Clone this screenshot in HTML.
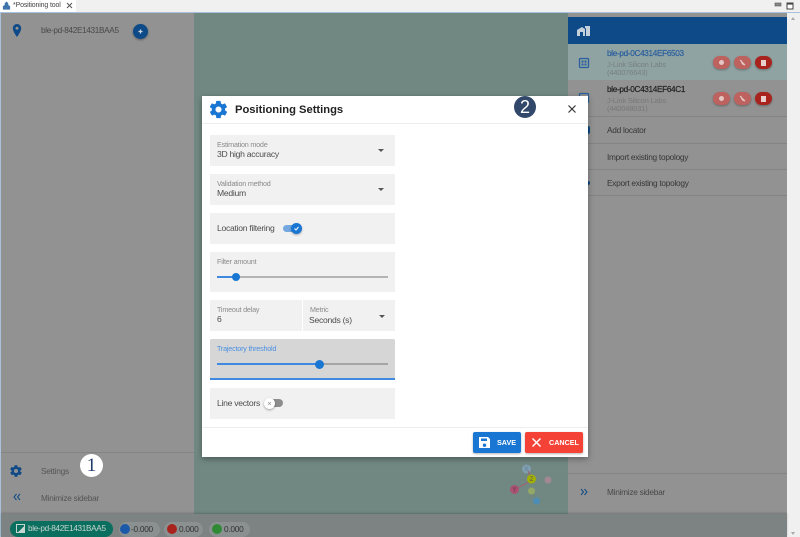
<!DOCTYPE html>
<html><head><meta charset="utf-8">
<style>
html,body{margin:0;padding:0}
body{width:800px;height:537px;overflow:hidden;position:relative;background:#f0f0f0;font-family:"Liberation Sans",sans-serif;}
.a{position:absolute}
.t{position:absolute;white-space:nowrap;line-height:12px}
.s{font-size:8.200px;letter-spacing:-.32px}
.m{font-size:8.300px;letter-spacing:-.27px}
.n{font-size:7.500px;letter-spacing:-.18px;line-height:8px}
.f{position:absolute;left:210px;width:185px;background:#f1f1f1}
.lbl{position:absolute;font-size:7.200px;letter-spacing:-.2px;color:#8a8a8a;white-space:nowrap;line-height:10px}
.val{position:absolute;font-size:8.600px;letter-spacing:-.28px;color:#4d4d4d;white-space:nowrap;line-height:11px}
.arr{position:absolute;width:0;height:0;border-left:3px solid transparent;border-right:3px solid transparent;border-top:3px solid #555}
.line{position:absolute;height:2px;background:#b4b4b4}
.rb{position:absolute;width:17px;height:13px;border-radius:7px;box-shadow:0 1px 2px rgba(0,0,0,.3)}
.pill{position:absolute;top:522px;height:15px;border-radius:8px;background:#8b9090}
.dot{position:absolute;border-radius:50%}
</style></head><body>
<!-- title bar -->
<div class="a" style="left:0;top:0;width:76px;height:12px;background:#fff"></div>
<svg class="a" style="left:2px;top:1px" width="9" height="10" viewBox="0 0 10 10"><path d="M5 0l2 2v2l2 1v4H1V5l2-1V2z" fill="#3f74ad"/></svg>
<div class="t" style="left:13px;top:0;font-size:7px;letter-spacing:-.15px;color:#444;line-height:12px">*Positioning tool</div>
<svg class="a" style="left:66px;top:2px" width="7" height="7" viewBox="0 0 7 7"><path d="M1 1l5 5M6 1l-5 5" stroke="#555" stroke-width="1"/></svg>
<svg class="a" style="left:774px;top:2px" width="8" height="6"><rect x="1" y="1" width="6" height="3" fill="#888" stroke="#555" stroke-width=".6"/></svg>
<svg class="a" style="left:786px;top:2px" width="9" height="9"><rect x="1" y="1" width="6" height="6" fill="#fff" stroke="#444" stroke-width="1"/><rect x="1" y="1" width="6" height="1.600" fill="#444"/></svg>
<div class="a" style="left:0;top:12px;width:800px;height:1px;background:#a9c2dc"></div>
<div class="a" style="left:0;top:12px;width:1px;height:525px;background:#a9c2dc"></div>
<!-- left sidebar -->
<div class="a" style="left:1px;top:13px;width:193px;height:501px;background:#929292"></div>
<svg class="a" style="left:12px;top:24px" width="10" height="13" viewBox="0 0 10 13"><path fill-rule="evenodd" d="M5 0a4.200 4.200 0 0 0-4.200 4.200C.8 7.400 5 13 5 13s4.200-5.600 4.200-8.800A4.200 4.200 0 0 0 5 0zm0 2.800a1.500 1.500 0 1 1 0 3 1.500 1.500 0 0 1 0-3z" fill="#0d4a87"/></svg>
<div class="t s" style="left:41px;top:25px;color:#484848">ble-pd-842E1431BAA5</div>
<div class="dot" style="left:133px;top:24px;width:15px;height:15px;background:#0d4a87;box-shadow:0 1px 2px rgba(0,0,0,.35)"></div>
<svg class="a" style="left:137px;top:28px" width="7" height="7"><path d="M3.500 1.500v4M1.500 3.500h4" stroke="#cfd8e2" stroke-width="1.200"/></svg>
<div class="a" style="left:1px;top:452px;width:193px;height:1px;background:#848484"></div>
<svg class="a" style="left:9px;top:464px" width="14" height="14" viewBox="0 0 24 24"><path fill="#0d4a87" fill-rule="evenodd" d="M19.400 13c.1-.3.100-.7.100-1s0-.7-.1-1l2.100-1.600c.2-.2.200-.4.100-.6l-2-3.500c-.1-.2-.4-.3-.6-.2l-2.500 1c-.5-.4-1.100-.7-1.700-1l-.4-2.600c0-.2-.2-.4-.5-.4h-4c-.3 0-.5.200-.5.400l-.4 2.600c-.6.300-1.200.6-1.700 1l-2.500-1c-.2-.1-.5 0-.6.200l-2 3.500c-.1.200-.1.400.1.600L4.500 11c0 .3-.1.700-.1 1s0 .7.100 1l-2.100 1.600c-.2.200-.2.400-.1.600l2 3.500c.1.200.4.300.6.200l2.500-1c.5.400 1.100.7 1.700 1l.4 2.600c0 .2.200.4.500.4h4c.3 0 .5-.2.500-.4l.4-2.600c.6-.3 1.200-.6 1.700-1l2.500 1c.2.100.5 0 .6-.2l2-3.500c.1-.2.100-.4-.1-.6zM12 15.500a3.500 3.500 0 1 1 0-7 3.500 3.500 0 0 1 0 7z"/></svg>
<div class="t m" style="left:41px;top:465px;color:#555">Settings</div>
<div class="dot" style="left:80px;top:454px;width:23px;height:23px;background:#fff"></div>
<div class="t" style="left:80px;top:454px;width:23px;text-align:center;line-height:23px;font-size:19px;color:#1f3a68;font-family:'Liberation Serif',serif">1</div>
<svg class="a" style="left:13px;top:493px" width="8" height="8" viewBox="0 0 8 8"><path d="M3.500 1L1 4l2.500 3M7 1L4.500 4 7 7" fill="none" stroke="#0d4a87" stroke-width="1"/></svg>
<div class="t m" style="left:41px;top:492px;color:#555">Minimize sidebar</div>
<!-- canvas -->
<div class="a" style="left:194px;top:13px;width:374px;height:501px;background:#718882"></div>
<!-- gizmo -->
<svg class="a" style="left:500px;top:460px" width="60" height="50">
<circle cx="26.500" cy="9" r="4.500" fill="#7f9fb0"/>
<circle cx="48" cy="20" r="3.500" fill="#a28794"/>
<circle cx="31.500" cy="31" r="3.500" fill="#93a864"/>
<circle cx="36.500" cy="41" r="3.500" fill="#4d8cb5"/>
<path d="M14 30l18-10M32 19l-4-8" stroke="#a85a70" stroke-width="1"/>
<circle cx="14.500" cy="29.500" r="4.500" fill="#a85270"/>
<circle cx="31.500" cy="19" r="4.500" fill="#a3b000"/>
<text x="31.500" y="21" font-size="6" text-anchor="middle" fill="#555" font-family="Liberation Sans">Z</text>
<text x="14.500" y="31.500" font-size="6" text-anchor="middle" fill="#6b3348" font-family="Liberation Sans">Y</text>
<text x="26.500" y="11" font-size="6" text-anchor="middle" fill="#5f7f90" font-family="Liberation Sans">X</text>
</svg>
<!-- right panel -->
<div class="a" style="left:568px;top:13px;width:219px;height:501px;background:#929292"></div>
<div class="a" style="left:568px;top:17px;width:219px;height:27px;background:#0d4a87"></div>
<svg class="a" style="left:577px;top:25px" width="13" height="12" viewBox="0 0 13 12"><path d="M0 5l5-3 3 2V11H6V7H3v4H0zM8 1h5v10H9V3.500L8 3z" fill="#c4d0dc"/></svg>
<div class="a" style="left:568px;top:44px;width:219px;height:36px;background:#8fa3a2"></div>
<div class="a" style="left:568px;top:116px;width:219px;height:1px;background:#848484"></div>
<div class="a" style="left:568px;top:143px;width:219px;height:1px;background:#848484"></div>
<div class="a" style="left:568px;top:169px;width:219px;height:1px;background:#848484"></div>
<div class="a" style="left:568px;top:195px;width:219px;height:1px;background:#848484"></div>
<div class="a" style="left:568px;top:473px;width:219px;height:1px;background:#848484"></div>
<div class="a" style="left:586px;top:126px;width:4px;height:8px;border-radius:4px;background:#0d4a87"></div>
<div class="a" style="left:586px;top:181px;width:4px;height:4px;border-radius:2px;background:#0d4a87"></div>
<svg class="a" style="left:578px;top:57px" width="12" height="12"><rect x="1.500" y="1.500" width="9" height="9" rx="1" fill="none" stroke="#2a5f9e" stroke-width="1.300"/><rect x="3.500" y="3.500" width="2" height="2" fill="#2a5f9e"/><rect x="6.500" y="3.500" width="2" height="2" fill="#2a5f9e"/><rect x="3.500" y="6.500" width="2" height="2" fill="#2a5f9e"/><rect x="6.500" y="6.500" width="2" height="2" fill="#2a5f9e"/></svg>
<svg class="a" style="left:578px;top:92px" width="12" height="12"><rect x="1.500" y="1.500" width="9" height="9" rx="1" fill="none" stroke="#2a5f9e" stroke-width="1.300"/></svg>
<div class="t s" style="left:607px;top:48px;color:#2a5f9e;-webkit-text-stroke:.2px #2a5f9e">ble-pd-0C4314EF6503</div>
<div class="t n" style="left:607px;top:61px;color:#768080">J-Link Silicon Labs<br>(440076643)</div>
<div class="t s" style="left:607px;top:84px;color:#222;-webkit-text-stroke:.2px #222">ble-pd-0C4314EF64C1</div>
<div class="t n" style="left:607px;top:97px;color:#787878">J-Link Silicon Labs<br>(440048031)</div>
<div class="rb" style="left:713px;top:56px;background:#bd625e"></div>
<div class="rb" style="left:734px;top:56px;background:#bd625e"></div>
<div class="rb" style="left:755px;top:56px;background:#a8231d"></div>
<div class="rb" style="left:713px;top:92px;background:#bd625e"></div>
<div class="rb" style="left:734px;top:92px;background:#bd625e"></div>
<div class="rb" style="left:755px;top:92px;background:#a8231d"></div>
<div class="dot" style="left:719px;top:60px;width:5px;height:5px;background:#e4c6c4"></div>
<div class="dot" style="left:719px;top:96px;width:5px;height:5px;background:#e4c6c4"></div>
<svg class="a" style="left:739px;top:59px" width="7" height="7"><path d="M2 1c0 3 2 5 4 5M1 1l5 5" fill="none" stroke="#e4c6c4" stroke-width="1"/></svg>
<svg class="a" style="left:739px;top:95px" width="7" height="7"><path d="M2 1c0 3 2 5 4 5M1 1l5 5" fill="none" stroke="#e4c6c4" stroke-width="1"/></svg>
<div class="a" style="left:761px;top:60px;width:5px;height:6px;background:#e8cfcd"></div>
<div class="a" style="left:761px;top:96px;width:5px;height:6px;background:#e8cfcd"></div>
<div class="t m" style="left:607px;top:124px;color:#363636">Add locator</div>
<div class="t m" style="left:607px;top:151px;color:#363636">Import existing topology</div>
<div class="t m" style="left:607px;top:177px;color:#363636">Export existing topology</div>
<svg class="a" style="left:580px;top:488px" width="8" height="8" viewBox="0 0 8 8"><path d="M1 1l2.500 3L1 7M4.500 1L7 4 4.500 7" fill="none" stroke="#0d4a87" stroke-width="1"/></svg>
<div class="t m" style="left:607px;top:486px;color:#484848">Minimize sidebar</div>
<!-- scrollbar -->
<div class="a" style="left:787px;top:13px;width:13px;height:524px;background:#f0f0f0"></div>
<div class="a" style="left:791px;top:17px;width:0;height:0;border-left:2.500px solid transparent;border-right:2.500px solid transparent;border-bottom:3px solid #aaa"></div>
<div class="a" style="left:791px;top:532px;width:0;height:0;border-left:2.500px solid transparent;border-right:2.500px solid transparent;border-top:3px solid #aaa"></div>
<!-- bottom bar -->
<div class="a" style="left:1px;top:514px;width:786px;height:23px;background:#7d8282;box-shadow:0 -1px 2px rgba(0,0,0,.2)"></div>
<div class="a" style="left:10px;top:521px;width:103px;height:16px;border-radius:8px;background:#0b6f5f"></div>
<div class="a" style="left:16px;top:524px;width:9px;height:9px;border:1px solid #c5d5d0;box-sizing:border-box;background:linear-gradient(135deg,transparent 60%,#c5d5d0 60%)"></div>
<div class="t s" style="left:28px;top:523px;color:#c8d5d2">ble-pd-842E1431BAA5</div>
<div class="pill" style="left:119px;width:41px"></div>
<div class="pill" style="left:164px;width:39px"></div>
<div class="pill" style="left:209px;width:41px"></div>
<div class="dot" style="left:120px;top:524px;width:10px;height:10px;background:#1b5aa8"></div>
<div class="dot" style="left:167px;top:524px;width:10px;height:10px;background:#a8231d"></div>
<div class="dot" style="left:212px;top:524px;width:10px;height:10px;background:#2f8a35"></div>
<div class="t m" style="left:131px;top:523px;color:#333">-0.000</div>
<div class="t m" style="left:179px;top:523px;color:#333">0.000</div>
<div class="t m" style="left:224px;top:523px;color:#333">0.000</div>
<!-- dialog -->
<div class="a" style="left:202px;top:96px;width:386px;height:361px;background:#fff;box-shadow:0 2px 6px rgba(0,0,0,.35)"></div>
<div class="a" style="left:202px;top:123px;width:386px;height:1px;background:#eee"></div>
<div class="a" style="left:202px;top:427px;width:386px;height:1px;background:#eee"></div>
<svg class="a" style="left:208px;top:99px" width="21" height="21" viewBox="0 0 24 24"><path fill="#1976d2" fill-rule="evenodd" d="M19.400 13c.1-.3.100-.7.100-1s0-.7-.1-1l2.100-1.600c.2-.2.200-.4.100-.6l-2-3.500c-.1-.2-.4-.3-.6-.2l-2.500 1c-.5-.4-1.100-.7-1.700-1l-.4-2.600c0-.2-.2-.4-.5-.4h-4c-.3 0-.5.200-.5.400l-.4 2.600c-.6.300-1.200.6-1.700 1l-2.500-1c-.2-.1-.5 0-.6.200l-2 3.500c-.1.200-.1.400.1.600L4.500 11c0 .3-.1.700-.1 1s0 .7.100 1l-2.100 1.600c-.2.200-.2.400-.1.600l2 3.500c.1.200.4.300.6.200l2.500-1c.5.400 1.100.7 1.700 1l.4 2.600c0 .2.200.4.500.4h4c.3 0 .5-.2.500-.4l.4-2.600c.6-.3 1.200-.6 1.700-1l2.500 1c.2.100.5 0 .6-.2l2-3.500c.1-.2.100-.4-.1-.6zM12 15.500a3.500 3.500 0 1 1 0-7 3.500 3.500 0 0 1 0 7z"/></svg>
<div class="t" style="left:235px;top:103px;font-size:11.200px;font-weight:bold;color:#222;line-height:14px">Positioning Settings</div>
<div class="dot" style="left:514px;top:96px;width:22px;height:22px;background:#32486a"></div>
<div class="t" style="left:514px;top:96px;width:22px;text-align:center;line-height:22px;font-size:18px;color:#fff">2</div>
<svg class="a" style="left:567px;top:104px" width="10" height="10"><path d="M1.500 1.500l7 7M8.500 1.500l-7 7" stroke="#333" stroke-width="1.200"/></svg>
<!-- fields -->
<div class="f" style="top:135px;height:31px"></div>
<div class="lbl" style="left:217px;top:140px">Estimation mode</div>
<div class="val" style="left:217px;top:149px">3D high accuracy</div>
<div class="arr" style="left:378px;top:149px"></div>
<div class="f" style="top:174px;height:31px"></div>
<div class="lbl" style="left:217px;top:179px">Validation method</div>
<div class="val" style="left:217px;top:188px">Medium</div>
<div class="arr" style="left:378px;top:188px"></div>
<div class="f" style="top:213px;height:31px"></div>
<div class="val" style="left:217px;top:223px">Location filtering</div>
<div class="a" style="left:283px;top:225px;width:17px;height:7px;border-radius:4px;background:#74a8e0"></div>
<div class="dot" style="left:291px;top:223px;width:11px;height:11px;background:#1976d2;box-shadow:0 1px 2px rgba(0,0,0,.3)"></div>
<svg class="a" style="left:293px;top:225px" width="7" height="7"><path d="M1.500 3.500l1.500 1.500 2.500-3" fill="none" stroke="#fff" stroke-width="1"/></svg>
<div class="f" style="top:252px;height:40px"></div>
<div class="lbl" style="left:217px;top:257px">Filter amount</div>
<div class="line" style="left:217px;top:276px;width:171px"></div>
<div class="a" style="left:217px;top:276px;width:19px;height:2px;background:#3f8ae0"></div>
<div class="dot" style="left:232px;top:273px;width:8px;height:8px;background:#1976d2"></div>
<div class="f" style="top:300px;height:31px;width:92px"></div>
<div class="f" style="top:300px;height:31px;left:303px;width:92px"></div>
<div class="lbl" style="left:217px;top:305px">Timeout delay</div>
<div class="val" style="left:217px;top:314px">6</div>
<div class="lbl" style="left:310px;top:305px">Metric</div>
<div class="val" style="left:309px;top:315px">Seconds (s)</div>
<div class="arr" style="left:379px;top:315px"></div>
<div class="f" style="top:339px;height:40px;background:#d6d6d6;border-radius:2px 2px 0 0"></div>
<div class="a" style="left:210px;top:378px;width:185px;height:2px;background:#3f8ae0"></div>
<div class="lbl" style="left:217px;top:344px;color:#4a90e2">Trajectory threshold</div>
<div class="line" style="left:217px;top:363px;width:171px;background:#a5a5a5"></div>
<div class="a" style="left:217px;top:363px;width:103px;height:2px;background:#3f8ae0"></div>
<div class="dot" style="left:315px;top:360px;width:9px;height:9px;background:#1976d2"></div>
<div class="f" style="top:388px;height:31px"></div>
<div class="val" style="left:217px;top:398px">Line vectors</div>
<div class="a" style="left:268px;top:399px;width:15px;height:8px;border-radius:4px;background:#8d8d8d"></div>
<div class="dot" style="left:264px;top:398px;width:11px;height:11px;background:#fff;box-shadow:0 1px 2px rgba(0,0,0,.35)"></div>
<svg class="a" style="left:267px;top:401px" width="5" height="5"><path d="M1 1l3 3M4 1l-3 3" stroke="#999" stroke-width=".7"/></svg>
<!-- buttons -->
<div class="a" style="left:473px;top:432px;width:48px;height:21px;background:#1976d2;border-radius:2px;box-shadow:0 1px 2px rgba(0,0,0,.3)"></div>
<svg class="a" style="left:478px;top:436px" width="13" height="13" viewBox="0 0 13 13"><path fill-rule="evenodd" fill="#fff" d="M1 1h9l2 2v9H1zM3 2.500v2.500h6V2.500zM6.500 7.500a1.700 1.700 0 1 0 0 3.400 1.700 1.700 0 0 0 0-3.400z"/></svg>
<div class="t" style="left:497px;top:437px;font-size:7.200px;font-weight:bold;color:#fff">SAVE</div>
<div class="a" style="left:525px;top:432px;width:58px;height:21px;background:#f44336;border-radius:2px;box-shadow:0 1px 2px rgba(0,0,0,.3)"></div>
<svg class="a" style="left:531px;top:437px" width="11" height="11"><path d="M1.500 1.500l8 8M9.500 1.500l-8 8" stroke="#fff" stroke-width="1.500"/></svg>
<div class="t" style="left:549px;top:437px;font-size:7.200px;font-weight:bold;color:#fff">CANCEL</div>
</body></html>
